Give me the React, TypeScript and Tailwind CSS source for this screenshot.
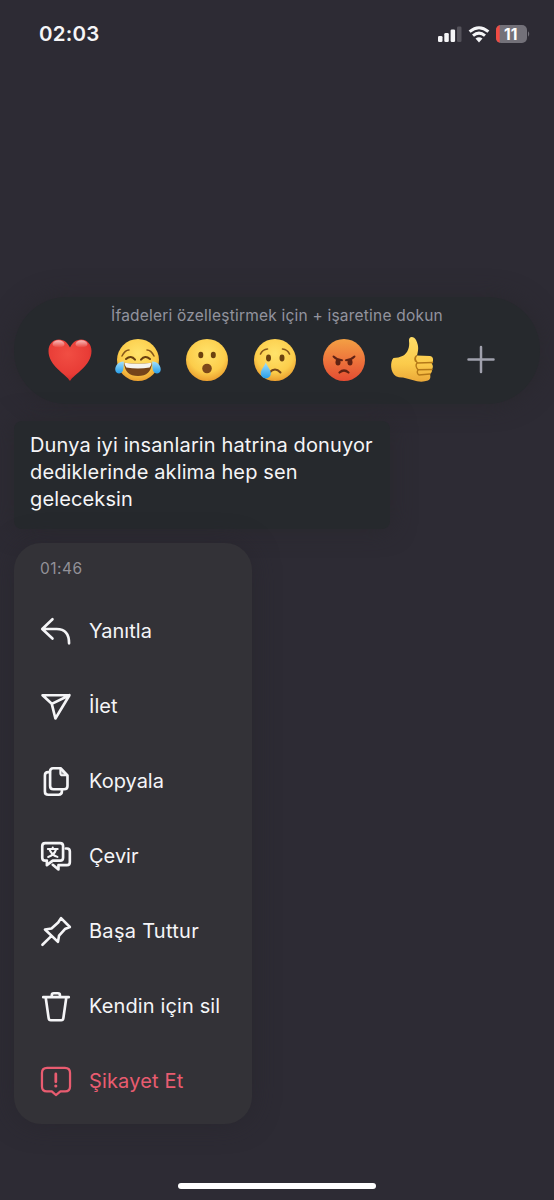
import type { ReactNode } from "react";

const Icon = ({ children }: { children: ReactNode }) => (
  <svg viewBox="0 0 32.6 32" className="size-8 shrink-0" fill="none" stroke="currentColor" strokeWidth="2.7" strokeLinecap="round" strokeLinejoin="round">
    {children}
  </svg>
);

const items: { label: string; icon: ReactNode; tracking: string; danger?: boolean }[] = [
  { label: "Yanıtla", tracking: "tracking-[0.05px]", icon: <path d="M12.7 4 2.3 14l10.4 9.7M2.8 14H17c8.2 0 12.6 5.2 12.6 14.6" /> },
  { label: "İlet", tracking: "tracking-[0.05px]", icon: <path d="M2.6 5H30L15.7 28.7 12 13.8ZM12 13.8 30 5" /> },
  {
    label: "Kopyala",
    tracking: "tracking-[0px]",
    icon: (
      <>
        <path d="M13.3 3H21l7 7.2V21q0 3.4-3.4 3.4H13.7q-3.4 0-3.4-3.4V6.4q0-3.4 3-3.4Z" />
        <path d="M20.7 3.4V8q0 2.2 2.2 2.2h4.600Z" fill="currentColor" fillOpacity=".5" strokeWidth="2" />
        <path d="M10 7H8.2Q5 7 5 10.3V26.6Q5 30 8.4 30h10.5q3.4 0 3.4-3.2v-2" />
      </>
    ),
  },
  {
    label: "Çevir",
    tracking: "tracking-[0px]",
    icon: (
      <>
        <path d="M5.3 2.9h15.2q3 0 3 3v11.8q0 3-3 3H13l-6 4.6v-4.6H5.3q-3 0-3-3V5.900q0-3 3-3Z" />
        <path d="M26.3 8.4h1.2q2.9 0 2.9 3v10.9q0 3-3 3h-8.6v4.5L13 25" />
        <path strokeWidth="2.1" d="M8 8.8h10M13 7.3v1.5M16.5 9q-2 6.4-8.2 7.9M9.6 9q2 6 8.2 7.9" />
      </>
    ),
  },
  {
    label: "Başa Tuttur",
    tracking: "tracking-[0.28px]",
    icon: <path d="m21.4 2.9 9 9-5 2.1-6 6.7-1.1 6.4L5.1 14.5l6.6-1.1 6.800-6.100ZM11.2 21.5 2.5 30" />,
  },
  {
    label: "Kendin için sil",
    tracking: "tracking-[0.12px]",
    icon: <path d="M3.3 7h26M12 6.8V5q0-2 2-2h4.3q2 0 2 2v1.8M5.8 7.3l3 21.1q.3 2.1 2.2 2.1h10.7q1.8 0 2.1-2.1l3-21.100" />,
  },
  {
    label: "Şikayet Et",
    tracking: "tracking-[0.15px]",
    danger: true,
    icon: (
      <>
        <path strokeWidth="2.3" d="M7.2 2.6h18.2q5.2 0 5.2 5.2v13.7q0 5-5 5h-4.8L16.2 30.3 12 26.5H7q-5 0-5-5V7.8q0-5.2 5.2-5.200Z" />
        <path strokeWidth="2.8" d="M16.1 8.8v8" />
        <circle cx="16.1" cy="21.1" r="1.6" fill="currentColor" stroke="none" />
      </>
    ),
  },
];

const Face = ({ children, red }: { children: ReactNode; red?: boolean }) => (
  <>
    <circle cx="24" cy="24" r="21" fill={red ? "url(#redFace)" : "url(#yellowFace)"} />
    {children}
  </>
);

const emojis: { name: string; art: ReactNode }[] = [
  {
    name: "heart",
    art: (
      <>
        <path d="M24 45C20 38 2.500 30 2.500 15 2.500 8 7 3.400 13 3.400c5 0 9 3.600 11 8 2-4.400 6-8 11-8 6 0 10.500 4.600 10.500 11.600C45.500 30 28 38 24 45Z" fill="url(#heart)" />
        <ellipse cx="12.500" cy="8" rx="6" ry="3.700" fill="url(#shine)" />
        <ellipse cx="35.500" cy="8" rx="6" ry="3.700" fill="url(#shine)" />
      </>
    ),
  },
  {
    name: "joy",
    art: (
      <Face>
        <path d="M8 20q3-6 7-6M33 14q4 0 7 6" fill="none" stroke="#87581a" strokeWidth="1.500" strokeLinecap="round" />
        <path d="M12 23q5-4.500 9 .6M27 23.600q4-5.100 9-.6" fill="none" stroke="#69400f" strokeWidth="2" strokeLinecap="round" />
        <path d="M10 26.700q14 2 28 0-1 13.300-14 13.300T10 26.700Z" fill="#75431a" />
        <path d="M10.300 26.800q13.700 2 27.400 0-.4 3-2 4.700-11.700 2.200-23.400 0-1.600-1.700-2-4.700Z" fill="#f5f3ee" />
        <path d="M9.800 25.500C3 25.500 1 31 1.300 34c.3 4 6 5 7.700.5 1-3 .5-7 .8-9ZM38.200 25.500c6.800 0 8.800 5.500 8.500 8.500-.3 4-6 5-7.700.5-1-3-.5-7-.8-9Z" fill="url(#tear)" />
      </Face>
    ),
  },
  {
    name: "surprised",
    art: (
      <Face>
        <ellipse cx="17.800" cy="19" rx="2.500" ry="3.300" fill="#6b420f" />
        <ellipse cx="30.300" cy="19" rx="2.500" ry="3.300" fill="#6b420f" />
        <ellipse cx="24" cy="32.500" rx="4.800" ry="4.800" fill="#7c481a" />
      </Face>
    ),
  },
  {
    name: "crying",
    art: (
      <Face>
        <path d="M9.500 18q2-4.500 7-5M31.500 13q5 .5 7 5" fill="none" stroke="#87581a" strokeWidth="1.600" strokeLinecap="round" />
        <ellipse cx="17.500" cy="22" rx="2.500" ry="3.400" fill="#6b420f" />
        <ellipse cx="31" cy="22" rx="2.500" ry="3.400" fill="#6b420f" />
        <path d="M18.500 36.500q5.500-6 11 0" fill="none" stroke="#74461a" strokeWidth="2" strokeLinecap="round" />
        <path d="M14.800 26.500c-1.500 4-5 7-5 11a5 5 0 0 0 10 0c0-4-3.500-7-5-11Z" fill="url(#tear)" />
      </Face>
    ),
  },
  {
    name: "angry",
    art: (
      <Face red>
        <path d="M13.500 20.500q3.500 3.500 8.500 3.700M34.500 20.500q-3.500 3.500-8.500 3.700" fill="none" stroke="#5f2315" strokeWidth="1.900" strokeLinecap="round" />
        <ellipse cx="18" cy="26.300" rx="2.500" ry="3.300" fill="#602212" />
        <ellipse cx="30" cy="26.300" rx="2.500" ry="3.300" fill="#602212" />
        <path d="M19.500 36.500q4.500-4 9 0" fill="none" stroke="#602212" strokeWidth="2.200" strokeLinecap="round" />
      </Face>
    ),
  },
  {
    name: "thumb",
    art: (
      <>
        <path d="M5.500 22q5 0 9.500-2.300C19.500 17.500 22 11 21 5c-.5-5 5-5 7-1 3 6 2.500 10 1 15.500l13 .5q3.500.5 3 4.500Q45 27 43.500 27.500q2.500 2.500.5 6 .5 3-2 4.700 1.500 4.500-2 6.300-7 2.500-15.500-.5L15 41.500q-4 .2-7-1.300c-6-3.700-6-15-2.500-18.200Z" fill="url(#thumb)" />
        <path d="M28 20.500c-2 2.500 0 4.500 1.500 6.500l15-.5M29 27c-2 2.500-.5 5 1 6.800l14-.3M30 34c-1.500 2-.5 4 1 5l11-1M28.500 19.700q-2.500 2-1 5.500" fill="none" stroke="#b47818" strokeWidth="1.400" strokeLinecap="round" />
      </>
    ),
  },
];

const Status = () => (
  <header className="flex h-[67px] items-center justify-between pl-[39px] pr-[23px]">
    <time className="text-[20.500px] leading-6 font-semibold tracking-[0.2px]">02:03</time>
    <div className="flex items-center">
      <svg viewBox="0 0 26 18" className="h-[18px] w-[26px]" fill="currentColor">
        <rect x="1" y="11" width="4.500" height="6" rx="1.300" />
        <rect x="7.300" y="8" width="4.500" height="9" rx="1.300" />
        <rect x="13.600" y="4.500" width="4.500" height="12.500" rx="1.300" />
        <rect x="20" y="1.500" width="4.500" height="15.500" rx="1.300" fill="#54525a" />
      </svg>
      <svg viewBox="0 0 22 18" className="ml-[5px] h-[18px] w-[22px]" fill="none" stroke="currentColor" strokeWidth="3">
        <path d="M1.600 6.700q9.400-8 18.800 0M5 10.700q6-5.200 12 0" />
        <path d="m7.500 13.600 3.500 3.800 3.500-3.800q-3.500-2.700-7 0Z" fill="currentColor" stroke="none" />
      </svg>
      <svg viewBox="0 0 35 18" className="ml-[6px] h-[18px] w-[35px]">
        <clipPath id="battery"><rect width="31" height="18" rx="5" /></clipPath>
        <g clipPath="url(#battery)"><rect width="31" height="18" fill="#737179" /><rect width="3.700" height="18" fill="#f14b43" /></g>
        <path d="M32 6.300q2.500 2.700 0 5.400Z" fill="#737179" />
        <text x="14.800" y="14.600" textAnchor="middle" className="fill-white text-[15.500px] font-bold">11</text>
      </svg>
    </div>
  </header>
);

export default function App() {
  return (
    <main className="flex h-[1200px] w-[554px] flex-col overflow-hidden bg-[#2d2b34] font-['Inter','Liberation_Sans',sans-serif] text-[#f5f5f7]">
      <svg className="absolute size-0">
        <defs>
          <radialGradient id="yellowFace" cx=".5" cy=".35" r=".68"><stop stopColor="#ffe36b" /><stop offset=".65" stopColor="#fccd4b" /><stop offset="1" stopColor="#e8982b" /></radialGradient>
          <linearGradient id="redFace" x2="0" y2="1"><stop stopColor="#f3a044" /><stop offset=".55" stopColor="#ed713b" /><stop offset="1" stopColor="#e44c32" /></linearGradient>
          <radialGradient id="heart" cx=".45" cy=".35" r=".7"><stop stopColor="#f14e43" /><stop offset=".7" stopColor="#e83c36" /><stop offset="1" stopColor="#cc2829" /></radialGradient>
          <linearGradient id="shine" x2="0" y2="1"><stop stopColor="#fff" stopOpacity=".65" /><stop offset="1" stopColor="#fff" stopOpacity="0" /></linearGradient>
          <linearGradient id="tear" x2="0" y2="1"><stop stopColor="#a3e0fc" /><stop offset="1" stopColor="#279ee9" /></linearGradient>
          <linearGradient id="thumb" x2="0" y2="1"><stop stopColor="#ffdd67" /><stop offset=".6" stopColor="#fbcb4b" /><stop offset="1" stopColor="#eba939" /></linearGradient>
        </defs>
      </svg>
      <Status />
      <section className="mx-[14px] mt-[230px] h-[107px] shrink-0 rounded-[53px] bg-[#26292d] pt-[9px] shadow-[0_0_24px_rgba(40,39,44,0.8)]">
        <p className="text-center text-[15.500px] leading-5 tracking-[0.21px] text-[#92939e]">İfadeleri özelleştirmek için + işaretine dokun</p>
        <div className="mt-[10px] flex items-center pl-[31.500px]">
          {emojis.map((e) => (
            <svg key={e.name} viewBox="0 0 48 48" className="mr-[20.600px] size-12 shrink-0">{e.art}</svg>
          ))}
          <svg viewBox="0 0 48 48" className="size-12 shrink-0 text-[#a0a1ad]" stroke="currentColor" strokeWidth="2.500" strokeLinecap="round"><path d="M11.500 23.500h25M24 11v25" /></svg>
        </div>
      </section>
      <p className="ml-[14px] mt-[17px] h-[108px] w-[376px] shrink-0 whitespace-nowrap rounded-[8px] bg-[#26292d] pl-[16px] pt-[11px] text-[20px] leading-[27px] tracking-[0.13px] shadow-[0_0_24px_rgba(40,39,44,0.8)]">
        Dunya iyi insanlarin hatrina donuyor<br />dediklerinde aklima hep sen<br />geleceksin
      </p>
      <section className="ml-[14px] mt-[14px] h-[581px] w-[238px] shrink-0 rounded-[27px] bg-[#333237] pl-[26px] pt-[16px] shadow-[0_0_26px_rgba(38,37,43,0.6)]">
        <time className="block text-[15.500px] leading-5 tracking-[0.5px] text-[#929197]">01:46</time>
        <ul className="mt-[14.500px]">
          {items.map((i) => (
            <li key={i.label} className={i.danger ? "flex h-[75px] items-center gap-[17px] text-[#e95c70]" : "flex h-[75px] items-center gap-[17px]"}>
              <Icon>{i.icon}</Icon>
              <span className={`whitespace-nowrap text-[20px] leading-6 ${i.tracking}`}>{i.label}</span>
            </li>
          ))}
        </ul>
      </section>
      <div className="mt-[59px] h-[6px] w-[198px] shrink-0 self-center rounded-full bg-white" />
    </main>
  );
}
